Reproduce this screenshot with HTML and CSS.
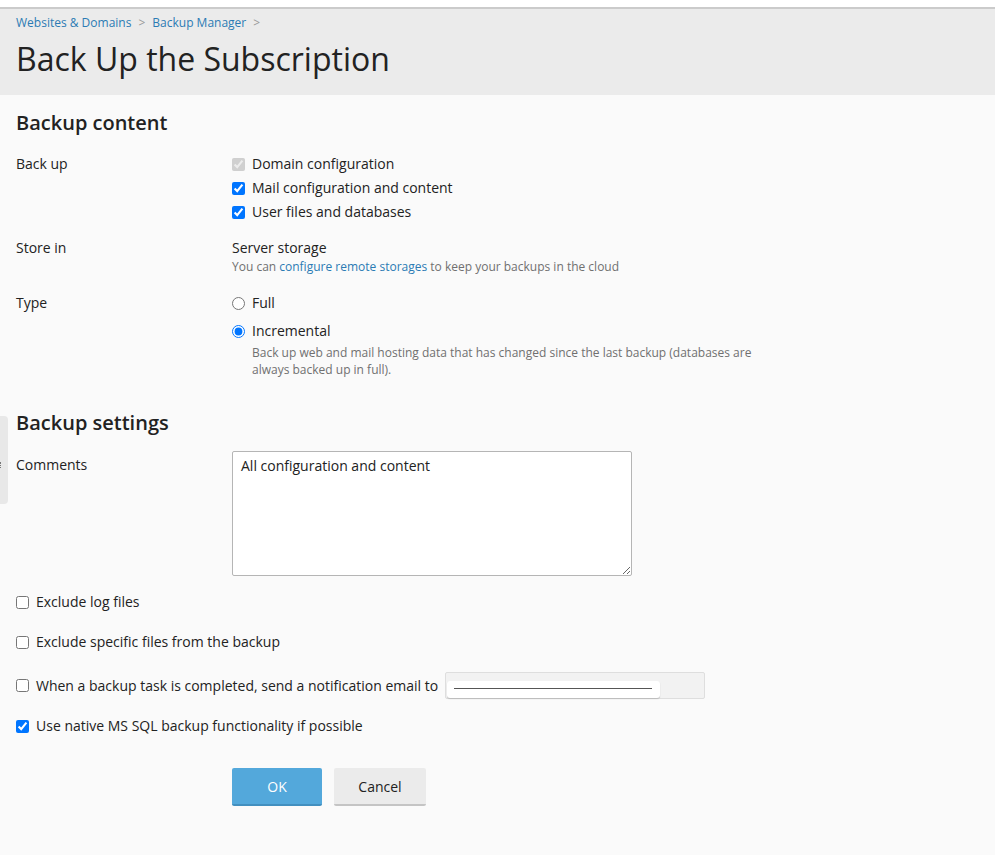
FILE: index.html
```html
<!DOCTYPE html>
<html lang="en">
<head>
    <meta charset="UTF-8">
    <title>Back Up the Subscription</title>
    <link rel="stylesheet" href="styles.css">
</head>
<body>
    <div class="side-tab"><span class="grip"></span></div>

    <div class="page-header">
        <div class="breadcrumbs">
            <a href="#">Websites &amp; Domains</a>
            <span class="sep">&gt;</span>
            <a href="#">Backup Manager</a>
            <span class="sep">&gt;</span>
        </div>
        <h1>Back Up the Subscription</h1>
    </div>

    <form class="content">
        <h2 class="section-title">Backup content</h2>

        <div class="form-row backup-row">
            <div class="field-label">Back up</div>
            <div class="field">
                <label class="option"><input type="checkbox" checked disabled> Domain configuration</label>
                <label class="option"><input type="checkbox" checked> Mail configuration and content</label>
                <label class="option"><input type="checkbox" checked> User files and databases</label>
            </div>
        </div>

        <div class="form-row store-row">
            <div class="field-label">Store in</div>
            <div class="field">
                <div class="value">Server storage</div>
                <div class="hint">You can <a href="#">configure remote storages</a> to keep your backups in the cloud</div>
            </div>
        </div>

        <div class="form-row type-row">
            <div class="field-label">Type</div>
            <div class="field">
                <label class="option radio"><input type="radio" name="type"> Full</label>
                <label class="option radio"><input type="radio" name="type" checked> Incremental</label>
                <div class="hint indent">Back up web and mail hosting data that has changed since the last backup (databases are always backed up in full).</div>
            </div>
        </div>

        <h2 class="section-title settings-title">Backup settings</h2>

        <div class="form-row comments-row">
            <div class="field-label">Comments</div>
            <div class="field">
                <textarea class="comments">All configuration and content</textarea>
            </div>
        </div>

        <label class="check-line first"><input type="checkbox"> Exclude log files</label>
        <label class="check-line"><input type="checkbox"> Exclude specific files from the backup</label>
        <div class="check-line email-line">
            <label><input type="checkbox"> When a backup task is completed, send a notification email to</label>
            <div class="email-box">
                <div class="email-inner"><span class="email-mask"></span></div>
            </div>
        </div>
        <label class="check-line sql-line"><input type="checkbox" checked> Use native MS SQL backup functionality if possible</label>

        <div class="buttons">
            <button type="button" class="btn btn-primary">OK</button>
            <button type="button" class="btn">Cancel</button>
        </div>
    </form>
</body>
</html>
```

FILE: styles.css
```css
* {
    box-sizing: border-box;
}

body {
    margin: 0;
    font-family: "Open Sans", "Liberation Sans", Arial, sans-serif;
    font-size: 14px;
    line-height: 20px;
    color: #222;
    background: #fafafa;
    border-top: 7px solid #fff;
    min-height: 100vh;
}

a {
    color: #2b7bb4;
    text-decoration: none;
}

/* collapsed sidebar handle on the left edge */
.side-tab {
    position: absolute;
    left: 0;
    top: 416px;
    width: 8px;
    height: 88px;
    background: #e8e8e8;
    border-radius: 0 4px 4px 0;
}

.side-tab .grip {
    position: absolute;
    left: 0;
    top: 46px;
    width: 2px;
    height: 6px;
    border-left: 1px dotted #777;
}

.page-header {
    background: #ebebeb;
    border-top: 2px solid #cbcbcb;
    padding: 5px 16px 0;
    height: 88px;
}

.breadcrumbs {
    font-size: 12px;
    line-height: 18px;
    display: flex;
    gap: 7px;
}

.breadcrumbs .sep {
    color: #999;
}

.page-header h1 {
    margin: 6px 0 0;
    font-size: 32px;
    line-height: 42px;
    font-weight: 400;
    color: #222;
}

.content {
    padding: 16px 16px 40px;
}

.section-title {
    margin: 0;
    font-size: 20px;
    line-height: 24px;
    font-weight: 600;
    color: #222;
}

.form-row {
    display: grid;
    grid-template-columns: 216px 1fr;
}

.backup-row {
    margin-top: 17px;
}

.field-label {
    line-height: 24px;
}

.option {
    display: flex;
    align-items: center;
    gap: 7px;
    line-height: 24px;
}

.option input,
.check-line input {
    width: 13px;
    height: 13px;
    margin: 0;
}

.store-row {
    margin-top: 14px;
}

.store-row .field-label {
    line-height: 20px;
}

.hint {
    font-size: 12px;
    line-height: 18px;
    color: #707070;
}

.type-row {
    margin-top: 15px;
}

.option.radio {
    margin-bottom: 4px;
}

.hint.indent {
    padding-left: 20px;
    line-height: 17px;
    max-width: 540px;
    margin-top: -3px;
}

.settings-title {
    margin-top: 33px;
}

.comments-row {
    margin-top: 16px;
}

.comments-row .field-label {
    padding-top: 4px;
    line-height: 20px;
}

.comments {
    display: block;
    width: 400px;
    height: 125px;
    padding: 4px 8px;
    border: 1px solid #b5b5b5;
    border-radius: 2px;
    background: #fff;
    font-family: inherit;
    font-size: 14px;
    line-height: 20px;
    color: #222;
}

.check-line {
    display: flex;
    align-items: center;
    gap: 7px;
    line-height: 20px;
    margin-top: 20px;
}

.check-line.first {
    margin-top: 16px;
}

.email-line label {
    display: flex;
    align-items: center;
    gap: 7px;
}

.email-line {
    margin-top: 20px;
}

.email-box {
    width: 260px;
    height: 27px;
    background: #f2f2f2;
    border: 1px solid #dedede;
    border-radius: 2px;
    padding: 8px 0 0 1px;
}

.email-inner {
    width: 213px;
    height: 17px;
    background: #fff;
    border-radius: 3px;
    box-shadow: 0 1px 1px #bbb;
    padding: 7px 8px 0 7px;
}

.email-mask {
    display: block;
    border-top: 1px solid #555;
}

.sql-line {
    margin-top: 17px;
}

.buttons {
    display: flex;
    gap: 12px;
    margin-top: 32px;
    padding-left: 216px;
}

.btn {
    width: 92px;
    height: 38px;
    border: none;
    border-bottom: 2px solid #c4c4c4;
    border-radius: 2px;
    background: #ebebeb;
    font-family: inherit;
    font-size: 14px;
    padding-top: 2px;
    color: #222;
}

.btn-primary {
    width: 90px;
    background: #53a8db;
    border-bottom-color: #428fbf;
    color: #fff;
}
```
